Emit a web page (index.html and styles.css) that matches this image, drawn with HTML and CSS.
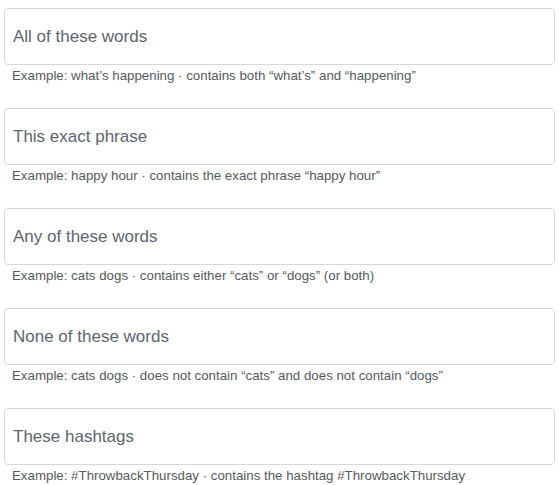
FILE: index.html
```html
<!DOCTYPE html>
<html lang="en">
<head>
<title>Advanced search - Words</title>
<link rel="stylesheet" href="styles.css">
</head>
<body>
<div class="search-fields">
    <div class="field">
        <label class="field-box">
            <span class="field-label">All of these words</span>
            <input type="text" />
        </label>
        <p class="field-hint">Example: what’s happening · contains both “what’s” and “happening”</p>
    </div>
    <div class="field">
        <label class="field-box">
            <span class="field-label">This exact phrase</span>
            <input type="text" />
        </label>
        <p class="field-hint">Example: happy hour · contains the exact phrase “happy hour”</p>
    </div>
    <div class="field">
        <label class="field-box">
            <span class="field-label">Any of these words</span>
            <input type="text" />
        </label>
        <p class="field-hint">Example: cats dogs · contains either “cats” or “dogs” (or both)</p>
    </div>
    <div class="field">
        <label class="field-box">
            <span class="field-label">None of these words</span>
            <input type="text" />
        </label>
        <p class="field-hint">Example: cats dogs · does not contain “cats” and does not contain “dogs”</p>
    </div>
    <div class="field">
        <label class="field-box">
            <span class="field-label">These hashtags</span>
            <input type="text" />
        </label>
        <p class="field-hint">Example: #ThrowbackThursday · contains the hashtag #ThrowbackThursday</p>
    </div>
</div>
</body>
</html>
```

FILE: styles.css
```css
html, body {
    margin: 0;
    background-color: white;
    font-family: "Liberation Sans", Arial, sans-serif;
}

.search-fields {
    display: flex;
    flex-direction: column;
    gap: 24px;
    padding: 8px 4px 0 4px;
}

.field {
    display: flex;
    flex-direction: column;
}

.field-box {
    display: flex;
    align-items: center;
    height: 57px;
    box-sizing: border-box;
    border: 1px solid #d6d9db;
    border-radius: 4px;
    padding: 1px 8px 0 8px;
}

.field-label {
    font-size: 17px;
    color: #5b6670;
}

.field-box input {
    flex: 1;
    min-width: 0;
    border: none;
    outline: none;
    background: transparent;
}

.field-hint {
    margin: 2px 0 0 8px;
    font-size: 13.3px;
    line-height: 17px;
    color: #555b60;
}
```
